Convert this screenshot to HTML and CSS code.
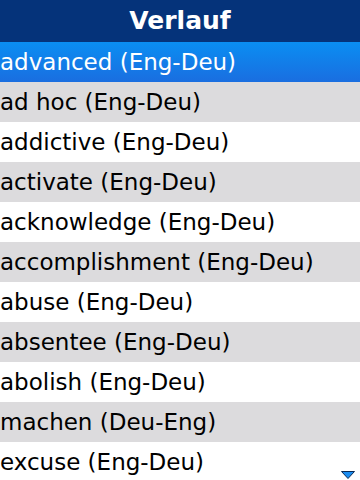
FILE: index.html
```html
<!doctype html>
<html lang="de">
<head>
	<meta charset="UTF-8">
	<title>Verlauf</title>
	<link rel="stylesheet" href="styles.css">
</head>
<body>
	<div class="screen">
		<div class="title">Verlauf</div>
		<ul class="list">
			<li class="row selected">advanced (Eng-Deu)</li>
			<li class="row">ad hoc (Eng-Deu)</li>
			<li class="row">addictive (Eng-Deu)</li>
			<li class="row">activate (Eng-Deu)</li>
			<li class="row">acknowledge (Eng-Deu)</li>
			<li class="row">accomplishment (Eng-Deu)</li>
			<li class="row">abuse (Eng-Deu)</li>
			<li class="row">absentee (Eng-Deu)</li>
			<li class="row">abolish (Eng-Deu)</li>
			<li class="row">machen (Deu-Eng)</li>
			<li class="row">excuse (Eng-Deu)</li>
		</ul>
		<svg class="more" width="14" height="8" viewBox="0 0 14 8">
			<polygon points="0.5,0.5 13.5,0.5 7,7.5" fill="#1a8cf0" stroke="#0a2a55" stroke-width="1"/>
		</svg>
	</div>
</body>
</html>
```
FILE: styles.css
```css
*{
	margin: 0;
	padding: 0;
	list-style: none;
}
body{
	font-family: "DejaVu Sans", sans-serif;
	background: #fff;
}
.screen{
	position: relative;
	width: 360px;
	height: 480px;
	overflow: hidden;
}
.title{
	height: 42px;
	line-height: 41px;
	background: #05337a;
	color: #fff;
	font-weight: bold;
	font-size: 25px;
	text-align: center;
}
.row{
	height: 40px;
	line-height: 41px;
	font-size: 23px;
	color: #000;
	white-space: nowrap;
}
.row:nth-child(even){
	background: #dcdbdd;
}
.row.selected{
	background: linear-gradient(#0a8ef2, #1a6ee0);
	color: #fff;
}
.more{
	position: absolute;
	right: 5px;
	bottom: 1px;
}
```
